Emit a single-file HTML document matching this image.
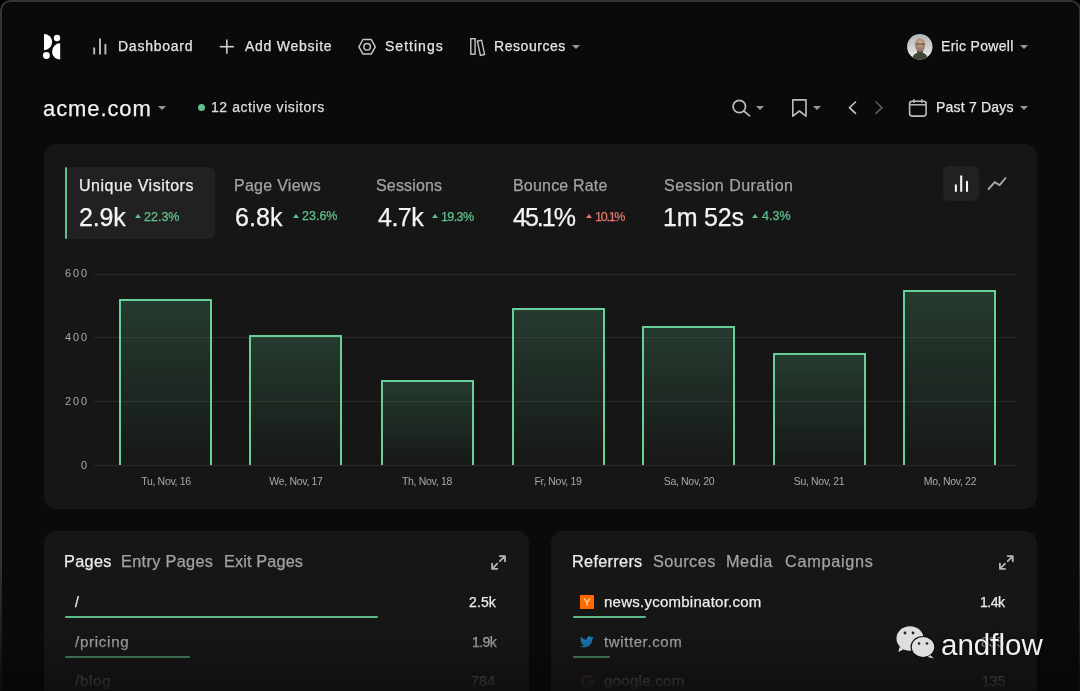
<!DOCTYPE html>
<html><head><meta charset="utf-8">
<style>
*{margin:0;padding:0;box-sizing:border-box}
html,body{width:1080px;height:691px;overflow:hidden;background:#000}
body{position:relative;font-family:"Liberation Sans",sans-serif;}
.frame{position:absolute;left:-0.5px;top:-0.5px;width:1081px;height:760px;border:2.5px solid #353535;border-radius:10.5px;background:#0a0a0a}
.t{position:absolute;line-height:1;white-space:nowrap;will-change:transform;-webkit-text-stroke:0.25px currentColor}
.card{position:absolute;background:#161616;border-radius:12px}
.nav{font-size:14px;color:#e4e4e4}
.caret{position:absolute;width:0;height:0;border-left:4px solid transparent;border-right:4px solid transparent;border-top:4.5px solid #9a9a9a}
svg{position:absolute;overflow:visible}
.lbl{font-size:16px;color:#a3a3a3}
.val{font-size:25px;color:#f4f4f4}
.pct{font-size:12.5px;color:#5fc08d}
.tri{position:absolute;width:0;height:0;border-left:3.7px solid transparent;border-right:3.7px solid transparent;border-bottom:4px solid #5fc08d;margin-left:-0.2px}
.yl{font-size:11px;color:#a8a8a8;-webkit-text-stroke:0;text-align:right;width:40px;letter-spacing:1.9px}
.xl{font-size:10.5px;color:#a8a8a8;-webkit-text-stroke:0;text-align:center;width:120px;letter-spacing:-0.32px}
.grid{position:absolute;left:94px;width:921px;height:1px;background:#2a2a2a}
.bar{position:absolute;width:93.4px;border:2px solid #69cf99;border-bottom:none;border-radius:1px 1px 0 0;background:linear-gradient(to bottom,rgba(58,110,80,0.42),rgba(40,60,50,0.05))}
.tab{font-size:16.3px;color:#a3a3a3}
.row{font-size:14px;color:#ececec}
.gl{position:absolute;height:2px;background:#5dba88;border-radius:1px}
</style></head><body>
<div class="frame"></div>

<!-- logo -->
<svg style="left:0;top:0" width="1080" height="80" viewBox="0 0 1080 80">
  <path d="M44 33.9 A8.15 8.15 0 0 1 44 50.2 Z" fill="#fff"/>
  <path d="M60.2 43.3 A8.15 8.15 0 0 0 60.2 59.6 Z" fill="#fff"/>
  <circle cx="57" cy="38" r="3.2" fill="#fff"/>
  <circle cx="46.4" cy="55.5" r="3.45" fill="#fff"/>
  <!-- dashboard bars -->
  <g stroke="#bdbdbd" stroke-width="1.9" stroke-linecap="butt">
    <line x1="94.2" y1="47.5" x2="94.2" y2="54.4"/>
    <line x1="100" y1="38.6" x2="100" y2="54.4"/>
    <line x1="105.4" y1="44" x2="105.4" y2="54.4"/>
  </g>
  <!-- plus -->
  <g stroke="#d0d0d0" stroke-width="1.6">
    <line x1="219.8" y1="46.7" x2="233.9" y2="46.7"/>
    <line x1="226.85" y1="39.6" x2="226.85" y2="53.7"/>
  </g>
  <!-- hexagon -->
  <path d="M358.9 46.8 L363 39.5 L371.2 39.5 L375.3 46.8 L371.2 54.1 L363 54.1 Z" fill="none" stroke="#c4c4c4" stroke-width="1.5" stroke-linejoin="round"/>
  <circle cx="367.1" cy="46.8" r="3.3" fill="none" stroke="#c4c4c4" stroke-width="1.5"/>
  <!-- resources -->
  <rect x="470.8" y="38.7" width="4.3" height="15.5" fill="none" stroke="#c4c4c4" stroke-width="1.4"/>
  <g transform="rotate(-12 481 47.6)"><rect x="478.8" y="40.5" width="4.3" height="14.5" fill="none" stroke="#c4c4c4" stroke-width="1.4"/></g>
</svg>

<div class="t nav" style="left:118px;top:39.2px;letter-spacing:0.75px">Dashboard</div>
<div class="t nav" style="left:244.5px;top:39.2px;letter-spacing:0.75px">Add Website</div>
<div class="t nav" style="left:385px;top:39.2px;letter-spacing:1.02px">Settings</div>
<div class="t nav" style="left:494.3px;top:39.2px;letter-spacing:0.55px">Resources</div>
<div class="caret" style="left:572px;top:45.2px"></div>

<!-- avatar -->
<svg style="left:907px;top:34px" width="26" height="26" viewBox="0 0 26 26">
  <defs>
    <linearGradient id="av" x1="0" y1="0" x2="0" y2="1"><stop offset="0" stop-color="#b3b5b6"/><stop offset="1" stop-color="#ececec"/></linearGradient>
    <radialGradient id="face" cx="50%" cy="30%" r="70%"><stop offset="0" stop-color="#d2ad95"/><stop offset="1" stop-color="#8e6d5c"/></radialGradient>
    <clipPath id="avc"><circle cx="12.8" cy="12.7" r="12.7"/></clipPath>
  </defs>
  <circle cx="12.8" cy="12.7" r="12.7" fill="url(#av)"/>
  <g clip-path="url(#avc)">
    <path d="M5 26 C5.5 20.5 8.5 18.5 13 18.5 C17.5 18.5 20.5 20.5 21 26 Z" fill="#3f4835"/>
    <ellipse cx="13" cy="17.5" rx="3.2" ry="1.6" fill="#4a3a30"/>
    <ellipse cx="13.1" cy="11" rx="4.9" ry="7" fill="url(#face)"/>
    <rect x="8.2" y="9.4" width="10" height="1.3" rx="0.5" fill="#5a4a44" opacity="0.8"/>
  </g>
</svg>
<div class="t nav" style="left:941px;top:39.1px;letter-spacing:0.3px">Eric Powell</div>
<div class="caret" style="left:1020px;top:45.1px"></div>

<!-- row 2 -->
<div class="t" style="left:43px;top:97.5px;font-size:22px;color:#f2f2f2;letter-spacing:0.9px">acme.com</div>
<div class="caret" style="left:158px;top:105.8px"></div>
<div style="position:absolute;left:198px;top:104.3px;width:7px;height:7px;border-radius:50%;background:#5fc08d"></div>
<div class="t" style="left:210.8px;top:100.3px;font-size:14px;color:#dcdcdc;letter-spacing:0.57px">12 active visitors</div>

<svg style="left:0;top:0" width="1080" height="130" viewBox="0 0 1080 130">
  <circle cx="739.3" cy="106.5" r="6.2" fill="none" stroke="#bdbdbd" stroke-width="1.7"/>
  <line x1="743.8" y1="111" x2="749.6" y2="115.8" stroke="#bdbdbd" stroke-width="1.7" stroke-linecap="round"/>
  <path d="M792.8 99.9 L806 99.9 L806 116.2 L799.4 111 L792.8 116.2 Z" fill="none" stroke="#bdbdbd" stroke-width="1.6" stroke-linejoin="round"/>
  <path d="M855.5 102 L849.5 107.7 L855.5 113.4" fill="none" stroke="#c4c4c4" stroke-width="1.6" stroke-linecap="round"/>
  <path d="M876 102 L882 107.7 L876 113.4" fill="none" stroke="#5e5e5e" stroke-width="1.6" stroke-linecap="round"/>
  <rect x="909.6" y="101.3" width="16.5" height="14.8" rx="2.5" fill="none" stroke="#bdbdbd" stroke-width="1.6"/>
  <line x1="909.6" y1="104.8" x2="926.1" y2="104.8" stroke="#bdbdbd" stroke-width="1.5"/>
  <line x1="913.8" y1="99.3" x2="913.8" y2="103" stroke="#bdbdbd" stroke-width="1.5"/>
  <line x1="921.9" y1="99.3" x2="921.9" y2="103" stroke="#bdbdbd" stroke-width="1.5"/>
</svg>
<div class="caret" style="left:755.7px;top:106.2px"></div>
<div class="caret" style="left:812.8px;top:106.2px"></div>
<div class="t nav" style="left:935.5px;top:100.2px;letter-spacing:0.2px">Past 7 Days</div>
<div class="caret" style="left:1020px;top:106.1px"></div>

<!-- main card -->
<div class="card" style="left:43.5px;top:144px;width:993.5px;height:365px"></div>
<div style="position:absolute;left:65px;top:166.5px;width:150px;height:72px;background:#212121;border-radius:6px"></div>
<div style="position:absolute;left:65px;top:166.5px;width:2px;height:72px;background:#5fc08d;border-radius:1px"></div>

<div class="t lbl" style="left:79px;top:177.5px;color:#ececec;letter-spacing:0.51px">Unique Visitors</div>
<div class="t val" style="left:79px;top:204.5px;letter-spacing:-0.2px">2.9k</div>
<div class="tri" style="left:135.3px;top:214.3px"></div>
<div class="t pct" style="left:144.3px;top:210.7px;letter-spacing:0px">22.3%</div>

<div class="t lbl" style="left:234px;top:177.5px;letter-spacing:0.27px">Page Views</div>
<div class="t val" style="left:235px;top:204.5px;letter-spacing:0.07px">6.8k</div>
<div class="tri" style="left:293.1px;top:214.3px"></div>
<div class="t pct" style="left:302px;top:210.3px">23.6%</div>

<div class="t lbl" style="left:376px;top:177.5px;letter-spacing:0.17px">Sessions</div>
<div class="t val" style="left:377.5px;top:204.5px;letter-spacing:-0.5px">4.7k</div>
<div class="tri" style="left:432.5px;top:214.3px"></div>
<div class="t pct" style="left:440.8px;top:210.7px;letter-spacing:-0.6px">19.3%</div>

<div class="t lbl" style="left:513px;top:177.5px;letter-spacing:0.19px">Bounce Rate</div>
<div class="t val" style="left:513px;top:204.5px;letter-spacing:-2px">45.1%</div>
<div class="tri" style="left:586.4px;top:214.3px;border-bottom-color:#e0776d"></div>
<div class="t pct" style="left:594.8px;top:210.7px;color:#e0776d;letter-spacing:-1.25px">10.1%</div>

<div class="t lbl" style="left:663.5px;top:177.5px;letter-spacing:0.47px">Session Duration</div>
<div class="t val" style="left:663px;top:204.5px;letter-spacing:-0.2px">1m 52s</div>
<div class="tri" style="left:752.6px;top:214.3px"></div>
<div class="t pct" style="left:761.5px;top:210.3px">4.3%</div>

<!-- chart toggle -->
<div style="position:absolute;left:943.4px;top:165.6px;width:35.5px;height:35.7px;background:#212121;border-radius:6px"></div>
<svg style="left:0;top:0" width="1080" height="220" viewBox="0 0 1080 220">
  <g stroke="#f2f2f2" stroke-width="2.1" stroke-linecap="round">
    <line x1="955.9" y1="185.4" x2="955.9" y2="190.9"/>
    <line x1="961.2" y1="176.2" x2="961.2" y2="190.9"/>
    <line x1="967" y1="181.9" x2="967" y2="190.9"/>
  </g>
  <path d="M988.6 189 L994.8 182.1 L999.6 185.2 L1005.5 178" fill="none" stroke="#a8a8a8" stroke-width="1.9" stroke-linecap="round" stroke-linejoin="round"/>
</svg>

<!-- chart -->
<div class="grid" style="top:273.5px"></div>
<div class="grid" style="top:337px"></div>
<div class="grid" style="top:401px"></div>
<div class="grid" style="top:464.7px"></div>
<div class="t yl" style="left:48.5px;top:268.4px">600</div>
<div class="t yl" style="left:48.5px;top:332px">400</div>
<div class="t yl" style="left:48.5px;top:396px">200</div>
<div class="t yl" style="left:48.5px;top:460px">0</div>

<div class="bar" style="left:119px;top:299px;height:166px"></div>
<div class="bar" style="left:249px;top:335px;height:130px"></div>
<div class="bar" style="left:380.5px;top:380px;height:85px"></div>
<div class="bar" style="left:511.5px;top:307.8px;height:157.2px"></div>
<div class="bar" style="left:642px;top:326px;height:139px"></div>
<div class="bar" style="left:772.5px;top:353px;height:112px"></div>
<div class="bar" style="left:903px;top:290px;height:175px"></div>

<div class="t xl" style="left:105.8px;top:476px">Tu, Nov, 16</div>
<div class="t xl" style="left:236px;top:476px">We, Nov, 17</div>
<div class="t xl" style="left:367px;top:476px">Th, Nov, 18</div>
<div class="t xl" style="left:498px;top:476px">Fr, Nov, 19</div>
<div class="t xl" style="left:628.5px;top:476px">Sa, Nov, 20</div>
<div class="t xl" style="left:759px;top:476px">Su, Nov, 21</div>
<div class="t xl" style="left:890px;top:476px">Mo, Nov, 22</div>

<!-- bottom cards -->
<div class="card" style="left:43.5px;top:531px;width:485.5px;height:200px"></div>
<div class="card" style="left:551px;top:531px;width:486px;height:200px"></div>

<div class="t tab" style="left:64.3px;top:552.6px;color:#ececec;letter-spacing:0.32px">Pages</div>
<div class="t tab" style="left:121.3px;top:552.6px;letter-spacing:0.33px">Entry Pages</div>
<div class="t tab" style="left:224.3px;top:552.6px;letter-spacing:0.13px">Exit Pages</div>

<div class="t tab" style="left:571.5px;top:552.6px;color:#ececec;letter-spacing:0.3px">Referrers</div>
<div class="t tab" style="left:652.7px;top:552.6px;letter-spacing:0.43px">Sources</div>
<div class="t tab" style="left:725.5px;top:552.6px;letter-spacing:0.52px">Media</div>
<div class="t tab" style="left:784.5px;top:552.6px;letter-spacing:0.7px">Campaigns</div>

<svg style="left:0;top:0" width="1080" height="691" viewBox="0 0 1080 691">
  <g fill="none" stroke="#b4b4b4" stroke-width="1.8" stroke-linecap="round" stroke-linejoin="round">
    <path d="M499.8 556.1 L505 556.1 L505 561.3 M505 556.1 L499.9 561.2"/>
    <path d="M492.1 563.6 L492.1 568.8 L497.3 568.8 M492.1 568.8 L497.2 563.7"/>
    <path d="M1007.6 556.1 L1012.8 556.1 L1012.8 561.3 M1012.8 556.1 L1007.7 561.2"/>
    <path d="M999.9 563.6 L999.9 568.8 L1005.1 568.8 M999.9 568.8 L1005 563.7"/>
  </g>
</svg>

<!-- pages rows -->
<div class="t row" style="left:75px;top:594.5px">/</div>
<div class="gl" style="left:64.8px;top:616px;width:313px"></div>
<div class="t row" style="left:469px;top:594.8px;letter-spacing:0.1px">2.5k</div>
<div class="t row" style="left:74.8px;top:633.5px;font-size:15px;color:#b4b4b4;letter-spacing:0.75px">/pricing</div>
<div class="gl" style="left:64.8px;top:655.8px;width:125px"></div>
<div class="t row" style="left:471.8px;top:634.8px;color:#b4b4b4;letter-spacing:-0.6px">1.9k</div>
<div class="t row" style="left:75.3px;top:672.5px;font-size:15px;color:#a8a8a8;letter-spacing:0.75px">/blog</div>
<div class="t row" style="left:471px;top:673.8px;color:#a8a8a8;letter-spacing:0.3px">784</div>

<!-- referrer rows -->
<div style="position:absolute;left:579.7px;top:594.7px;width:14.2px;height:14.2px;background:#ff6a00"></div>
<svg style="left:579.7px;top:594.7px" width="14.2" height="14.2" viewBox="0 0 14.2 14.2"><path d="M4.3 3.6 L7.1 7.6 L9.9 3.6 M7.1 7.6 L7.1 11" fill="none" stroke="#ffe2cc" stroke-width="1.1"/></svg>
<div class="t row" style="left:603.8px;top:594px;font-size:15px;letter-spacing:0.25px">news.ycombinator.com</div>
<div class="gl" style="left:572.5px;top:616px;width:73.5px"></div>
<div class="t row" style="left:979.5px;top:594.8px;letter-spacing:-0.5px">1.4k</div>

<svg style="left:579.7px;top:635.7px" width="14" height="12" viewBox="0 0 24 20">
  <path d="M23.6 2.4c-.9.4-1.8.6-2.8.8 1-.6 1.8-1.6 2.1-2.7-.9.6-2 1-3.1 1.2C18.9.7 17.6.1 16.2.1c-2.7 0-4.8 2.2-4.8 4.8 0 .4 0 .8.1 1.1C7.5 5.8 3.9 3.9 1.5 1 1.1 1.7.8 2.6.8 3.5c0 1.7.9 3.2 2.2 4-.8 0-1.5-.2-2.2-.6v.1c0 2.3 1.7 4.3 3.9 4.7-.4.1-.8.2-1.3.2-.3 0-.6 0-.9-.1.6 1.9 2.4 3.3 4.5 3.4-1.7 1.3-3.7 2.1-6 2.1-.4 0-.8 0-1.2-.1 2.1 1.4 4.7 2.2 7.4 2.2 8.9 0 13.7-7.4 13.7-13.7v-.6c1-.7 1.8-1.6 2.5-2.5z" fill="#1b80c2"/>
</svg>
<div class="t row" style="left:604.2px;top:633.8px;font-size:15px;color:#b4b4b4;letter-spacing:0.6px">twitter.com</div>
<div class="gl" style="left:572.5px;top:655.8px;width:37px"></div>
<div class="t row" style="left:981px;top:634.8px;color:#a8a8a8">835</div>

<svg style="left:579.5px;top:674px" width="15" height="15" viewBox="0 0 24 24">
  <path d="M12 5.5c1.7 0 3.1.6 4.3 1.6l3.2-3.2C17.5 2.1 14.9 1 12 1 7.7 1 4 3.5 2.2 7.1l3.7 2.9C6.8 7.4 9.2 5.5 12 5.5z" fill="#7a3a34"/>
  <path d="M2.2 7.1C1.4 8.6 1 10.3 1 12s.4 3.4 1.2 4.9l3.7-2.9c-.2-.6-.4-1.3-.4-2s.1-1.4.4-2L2.2 7.1z" fill="#7a6a2a"/>
  <path d="M12 23c2.9 0 5.4-1 7.2-2.6l-3.5-2.7c-1 .7-2.2 1.1-3.7 1.1-2.8 0-5.2-1.9-6.1-4.5l-3.7 2.9C4 20.5 7.7 23 12 23z" fill="#2e5a36"/>
  <path d="M23 12.3c0-.8-.1-1.5-.2-2.2H12v4.3h6.2c-.3 1.4-1.1 2.5-2.5 3.3l3.5 2.7c2-1.9 3.8-4.6 3.8-8.1z" fill="#2f4f7a"/>
</svg>
<div class="t row" style="left:604px;top:673.3px;font-size:15px;color:#a8a8a8;letter-spacing:0.3px">google.com</div>
<div class="t row" style="left:982px;top:673.8px;color:#a8a8a8">135</div>

<!-- bottom fade -->
<div style="position:absolute;left:43.5px;top:632px;width:485.5px;height:59px;background:linear-gradient(to bottom,rgba(22,22,22,0),rgba(22,22,22,0.92))"></div>
<div style="position:absolute;left:551px;top:632px;width:486px;height:59px;background:linear-gradient(to bottom,rgba(22,22,22,0),rgba(22,22,22,0.92))"></div>
<div style="position:absolute;left:0;top:640px;width:1080px;height:51px;background:linear-gradient(to bottom,rgba(0,0,0,0),rgba(0,0,0,0.3))"></div>

<div style="position:absolute;left:0;top:560px;width:3px;height:131px;background:linear-gradient(to bottom,rgba(10,10,10,0),rgba(10,10,10,0.9))"></div>
<div style="position:absolute;left:1077px;top:560px;width:3px;height:131px;background:linear-gradient(to bottom,rgba(10,10,10,0),rgba(10,10,10,0.9))"></div>
<!-- watermark -->
<svg style="left:895px;top:624px" width="42" height="36" viewBox="0 0 42 36">
  <ellipse cx="15" cy="14.5" rx="13.5" ry="12.2" fill="#dedede"/>
  <path d="M4.5 23 L3.5 28 L9 25 Z" fill="#dedede"/>
  <ellipse cx="28" cy="23" rx="12.5" ry="11" fill="#0e0e0e"/>
  <ellipse cx="28" cy="23" rx="11.2" ry="10" fill="#dedede"/>
  <path d="M35 31 L39 34.5 L33 33 Z" fill="#dedede"/>
  <circle cx="10" cy="9" r="1.4" fill="#222"/>
  <circle cx="18" cy="9" r="1.4" fill="#222"/>
  <circle cx="24" cy="19.5" r="1.3" fill="#222"/>
  <circle cx="32" cy="19.5" r="1.3" fill="#222"/>
</svg>
<div class="t" style="left:940.8px;top:630.3px;font-size:29.5px;color:#f0f0f0;-webkit-text-stroke:0;text-shadow:0 0 2px rgba(10,10,10,0.9),0 0 4px rgba(10,10,10,0.6)">andflow</div>

</body></html>
